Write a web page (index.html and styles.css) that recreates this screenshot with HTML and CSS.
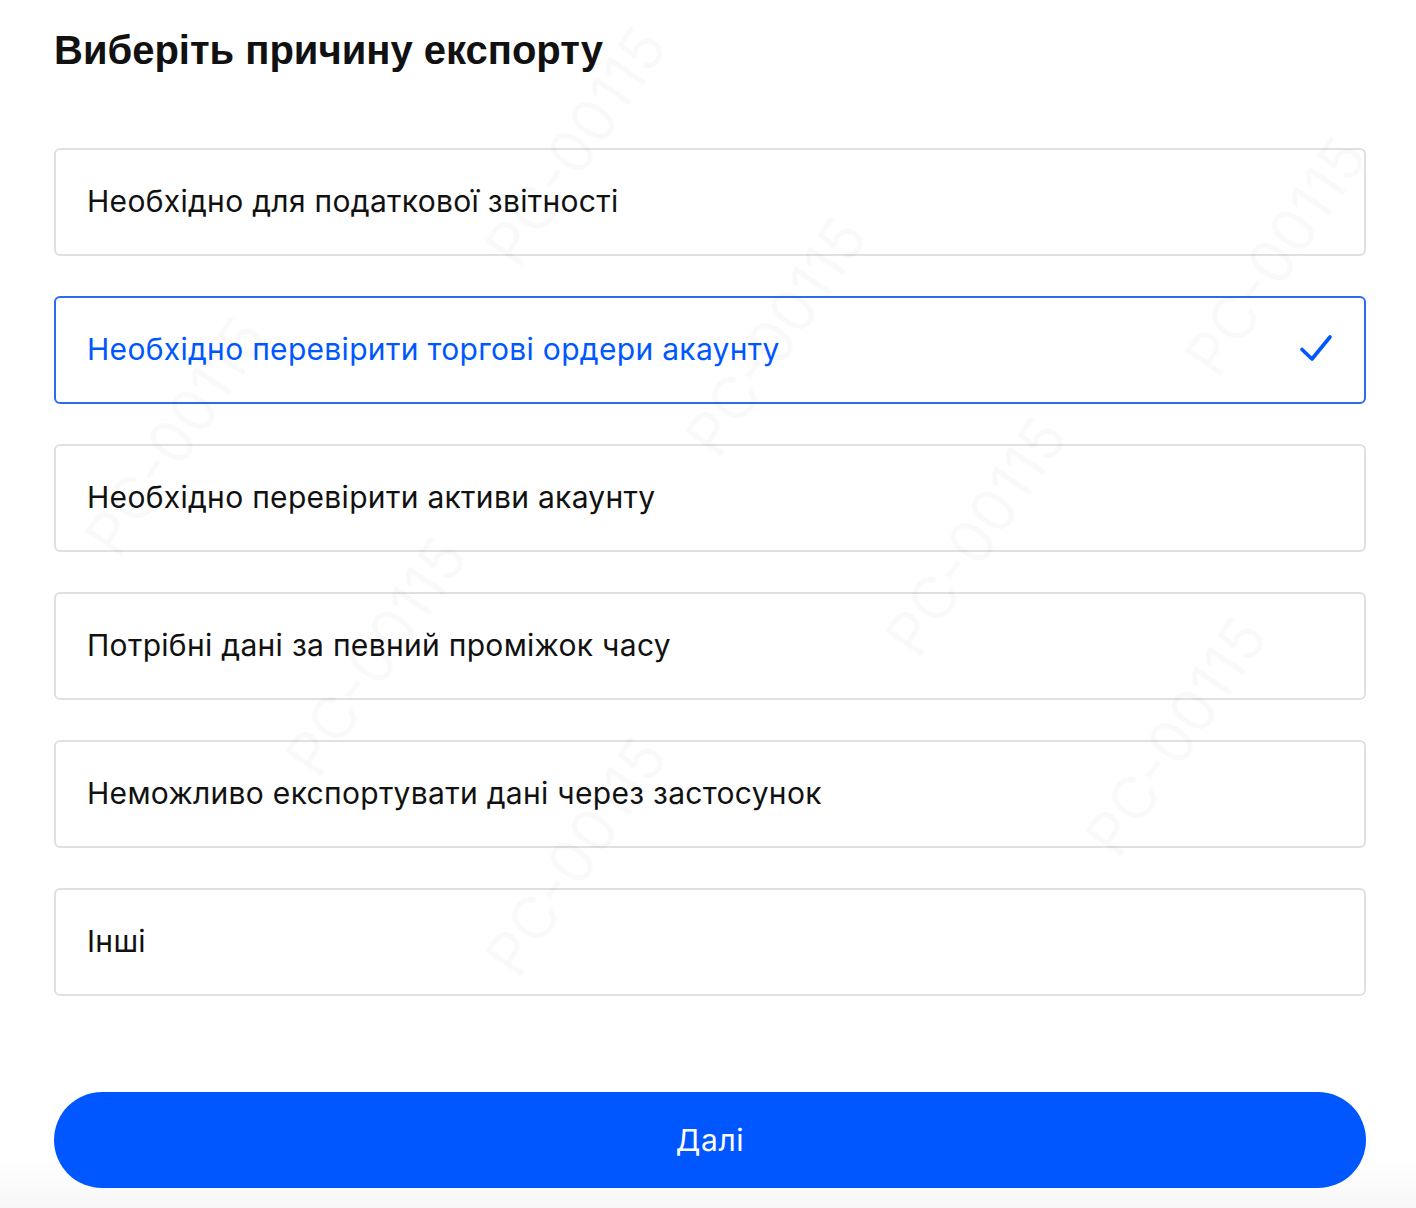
FILE: index.html
```html
<!DOCTYPE html>
<html lang="uk">
<head>
    <meta charset="UTF-8">
    <title>Виберіть причину експорту</title>
    <link rel="stylesheet" href="styles.css">
</head>
<body>
<div class="page">
    <h1 class="title">Виберіть причину експорту</h1>

    <ul class="reasons">
        <li class="reason">Необхідно для податкової звітності</li>
        <li class="reason selected">
            Необхідно перевірити торгові ордери акаунту
            <svg class="check" width="36" height="36" viewBox="0 0 36 36">
                <path d="M4 18.5 L14 28 L32 6" fill="none" stroke="#0057ff" stroke-width="3.6" stroke-linecap="round" stroke-linejoin="round"/>
            </svg>
        </li>
        <li class="reason">Необхідно перевірити активи акаунту</li>
        <li class="reason">Потрібні дані за певний проміжок часу</li>
        <li class="reason">Неможливо експортувати дані через застосунок</li>
        <li class="reason">Інші</li>
    </ul>

    <button class="next">Далі</button>
</div>

<div class="watermark">
    <span style="left:440px;top:110px">PC-00115</span>
    <span style="left:640px;top:300px">PC-00115</span>
    <span style="left:840px;top:500px">PC-00115</span>
    <span style="left:1040px;top:700px">PC-00115</span>
    <span style="left:240px;top:620px">PC-00115</span>
    <span style="left:440px;top:820px">PC-00115</span>
    <span style="left:1140px;top:220px">PC-00115</span>
    <span style="left:40px;top:400px">PC-00115</span>
</div>
</body>
</html>
```

FILE: styles.css
```css
*{padding:0;margin:0;box-sizing:border-box;}

body{
    background: linear-gradient(to bottom, #fff 1160px, #f7f7f7 1208px);
    font-family: Inter, "Liberation Sans", Arial, "Noto Sans", sans-serif;
    color: #111;
    width: 1416px;
    height: 1208px;
    overflow: hidden;
    position: relative;
}

.page{
    padding: 24px 50px 0 54px;
}

.title{
    font-family: "Liberation Sans", Arial, sans-serif;
    font-size: 40px;
    font-weight: bold;
    line-height: 52px;
    color: #111;
}

.reasons{
    list-style: none;
    margin-top: 72px;
    display: flex;
    flex-direction: column;
    gap: 40px;
}

.reason{
    height: 108px;
    border: 2px solid #e0e0e4;
    border-radius: 6px;
    padding: 0 30px 2px 31px;
    display: flex;
    align-items: center;
    justify-content: space-between;
    font-size: 30px;
    letter-spacing: 0.3px;
    color: #111;
    background: #fff;
}

.reason.selected{
    border-color: #2b6cf0;
    color: #0057ff;
}

.reason .check{
    display: block;
}

.next{
    display: block;
    width: 100%;
    height: 96px;
    margin-top: 96px;
    border: none;
    border-radius: 48px;
    background-color: #0057ff;
    color: #fff;
    font-family: Inter, "Liberation Sans", Arial, sans-serif;
    font-size: 30px;
    letter-spacing: 0.6px;
}

.watermark{
    position: absolute;
    left: 0;
    top: 0;
    width: 100%;
    height: 100%;
    pointer-events: none;
    overflow: hidden;
}

.watermark span{
    position: absolute;
    font-size: 60px;
    color: rgba(0,0,0,0.025);
    transform: rotate(-56deg);
    white-space: nowrap;
}
```
